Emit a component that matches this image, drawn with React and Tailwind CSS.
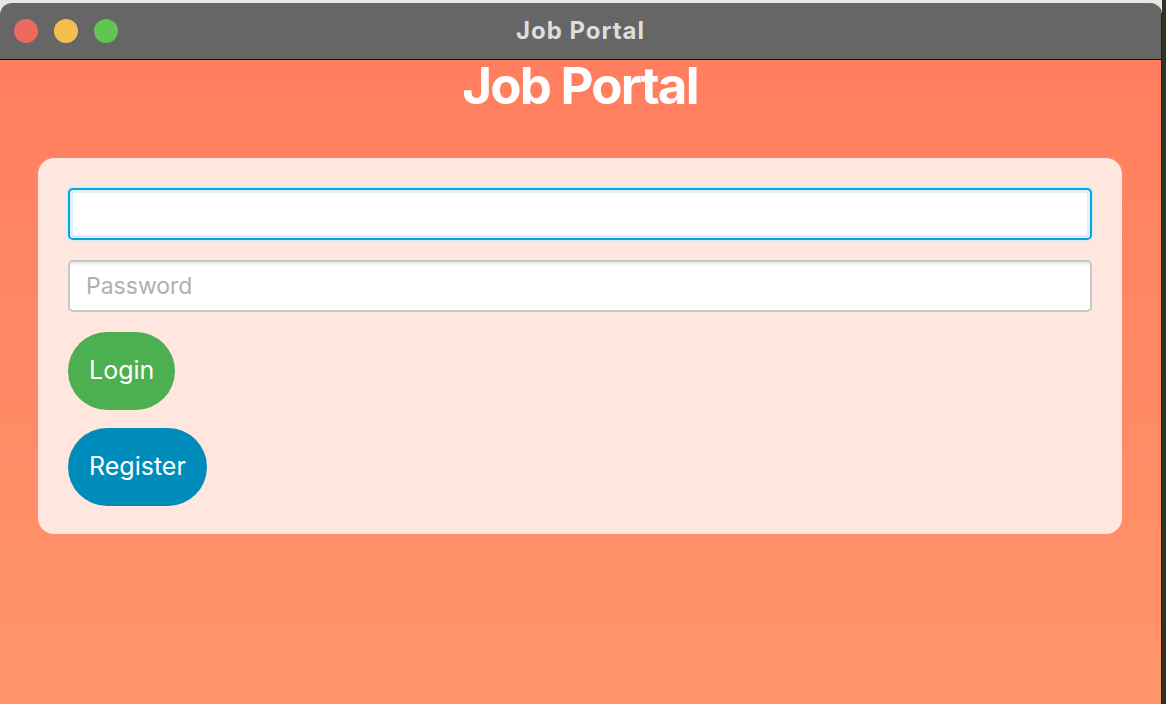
export default function App() {
  return (
    <div className="h-[704px] w-[1166px] overflow-hidden bg-[#2f3326] flex" style={{ fontFamily: "Inter, 'Liberation Sans', sans-serif" }}>
      <div className="flex flex-col w-[1162px] h-full bg-[#e9e7e2] pt-[3px]">
        <div className="flex flex-col flex-1 rounded-t-[12px] overflow-hidden border-r border-[#222]">
          <div className="relative h-[57px] bg-[#666666] border-b border-[#111] flex items-center shrink-0">
            <div className="flex items-center gap-[16px] pl-[14px]">
              <span className="w-[24px] h-[24px] rounded-full bg-[#ec6a5e]" />
              <span className="w-[24px] h-[24px] rounded-full bg-[#f4bf4f]" />
              <span className="w-[24px] h-[24px] rounded-full bg-[#61c554]" />
            </div>
            <div className="absolute inset-0 flex items-center justify-center text-[24px] tracking-[0.04em] font-bold text-[#dddddd]">
              Job Portal
            </div>
          </div>
          <div className="flex-1 bg-gradient-to-b from-[#ff7e5f] to-[#ff956b] pl-[38px] pr-[39px] pb-6">
            <h1 className="text-center text-[51px] leading-[52px] font-bold tracking-[-0.035em] text-white">
              Job Portal
            </h1>
            <div className="mt-[46px] bg-[#ffe6df] rounded-[16px] px-[30px] pt-[30px] pb-[28px] flex flex-col items-start">
              <input
                type="text"
                className="w-full h-[52px] rounded-[5px] border-2 border-[#0aa2d8] bg-white shadow-[inset_0_0_0_3px_#dff0fa,0_0_0_2px_#d6ecf6] outline-none px-[16px] text-[22px]"
              />
              <input
                type="password"
                placeholder="Password"
                className="mt-[20px] w-full h-[52px] rounded-[5px] border-2 border-[#c8c8c8] bg-white shadow-[inset_0_3px_3px_-1px_#e6e6e6] outline-none px-[16px] text-[23px] placeholder:text-[#b0b0b0]"
              />
              <button className="mt-[20px] h-[78px] px-[21px] rounded-full bg-[#4caf50] text-white text-[25px]">
                Login
              </button>
              <button className="mt-[18px] h-[78px] px-[21px] rounded-full bg-[#008cba] text-white text-[25px]">
                Register
              </button>
            </div>
          </div>
        </div>
      </div>
    </div>
  );
}
